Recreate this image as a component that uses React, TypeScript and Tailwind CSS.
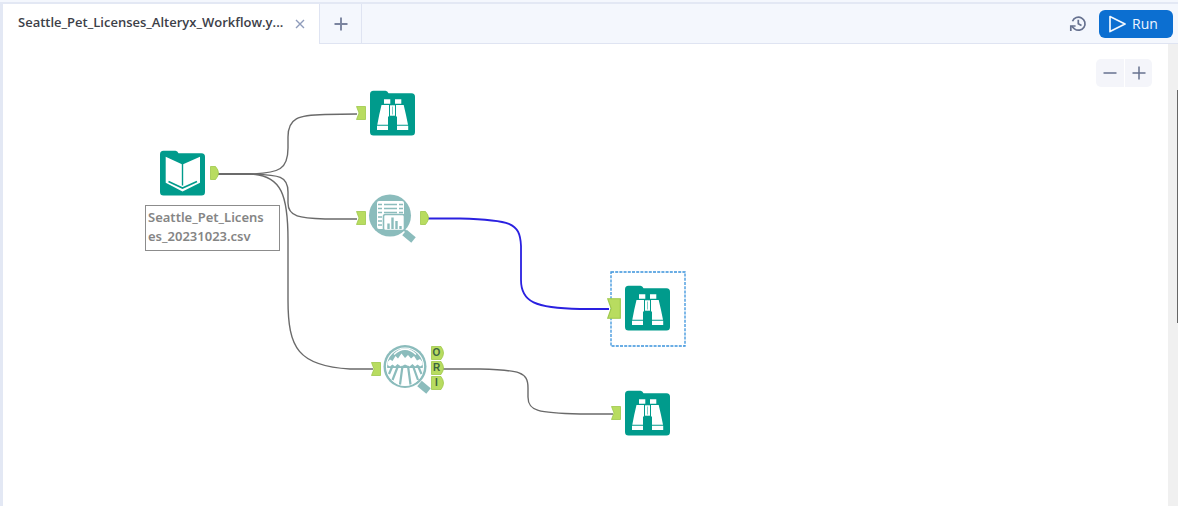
import type { ReactNode } from "react";

const TEAL = "#009b8c";
const SAGE = "#8bbcbc";

function Folder({ children }: { children: ReactNode }) {
  return (
    <svg width="46" height="46" viewBox="0 0 46 46" className="block" aria-hidden="true">
      <path d="M3.500 0.800H15.500Q17.500 0.800 18.500 3.300H41.500Q45 3.300 45 6.800V42Q45 45.500 41.500 45.500H3.500Q0 45.500 0 42V4.300Q0 0.800 3.500 0.800Z" fill={TEAL} />
      {children}
    </svg>
  );
}

function BookIcon() {
  return (
    <Folder>
      <path d="M5.700 6.700L22.500 14.500L40 6.700V32.700L22.500 41.500L5.700 32.700Z" fill="#fff" />
      <path d="M22.500 14V35.500" stroke={TEAL} strokeWidth="1.400" />
      <path d="M8.500 31.500L22.500 38L37 31.500" fill="none" stroke={TEAL} strokeWidth="1.600" />
    </Folder>
  );
}

function BinocularsIcon() {
  return (
    <Folder>
      <path d="M14 9.300H20.300V13.700H14ZM25 9.300H31.300V13.700H25Z" fill="#fff" />
      <path d="M11.500 15H19V26L18 27V34.700H7.300L9.200 25ZM26 15H33.700L36 25L38 34.700H27V27L26 26Z" fill="#fff" />
      <path d="M20 15.300H25V25.700H20Z" fill="#fff" />
      <path d="M22.500 16.500V24.500" stroke="#7fccc4" strokeWidth="1" />
      <path d="M7 35.800H18V40H7ZM27 35.800H38.200V40H27Z" fill="#fff" />
    </Folder>
  );
}

function ReportLensIcon() {
  return (
    <svg width="50" height="52" viewBox="0 0 50 52" className="block" aria-hidden="true">
      <path d="M36.500 39.500L45.500 47" stroke={SAGE} strokeWidth="7" />
      <path d="M33.500 34.500L38.500 39" stroke={SAGE} strokeWidth="2" />
      <circle cx="22" cy="22.500" r="21" fill={SAGE} />
      <path d="M11 8H34Q36 8 36 10V22H35V36H11Q9 36 9 34V10Q9 8 11 8Z" fill="#fff" />
      <path d="M10 11.500H14M16 11.500H29M31 11.500H35M10 15.500H14M16 15.500H29M31 15.500H35M10 19.500H14M16 19.500H29M31 19.500H35M10 24H14M10 28H14M10 32H14" stroke={SAGE} strokeWidth="1.600" />
      <rect x="15.500" y="21.500" width="21" height="16" rx="2" fill="#fff" stroke={SAGE} strokeWidth="1.600" />
      <path d="M20.500 36V30.500M24.500 36V24.500M28.500 36V28M32.500 36V33" stroke={SAGE} strokeWidth="2.400" />
    </svg>
  );
}

function ForestLensIcon() {
  return (
    <svg width="50" height="52" viewBox="0 0 50 52" className="block" aria-hidden="true">
      <path d="M36.500 39.500L45.500 47" stroke={SAGE} strokeWidth="7" />
      <circle cx="22" cy="22.500" r="21.500" fill={SAGE} />
      <circle cx="22" cy="22.500" r="18.500" fill={SAGE} stroke="#fff" strokeWidth="1.200" />
      <path d="M11 10.500Q22 0 33 10.500" fill="none" stroke="#fff" strokeWidth="1.400" />
      <path d="M4.500 21V18L7 15.500L9.500 17L12.500 12L15 14.500L18.500 9.500L22 14L25 11L28 14.500L31 12L34 16.500L37 15L39.500 18V21L37 22.500L34.500 20.500L32 22.500L29.500 20L26.500 22.500L22 20.500L18 22.500L14.500 20L12 22.500L9.500 20.500L7 22.500Z" fill="#fff" />
      <path d="M4 24H40A18 18 0 0 1 4 24Z" fill="#fff" />
      <path d="M9.500 22L6 30M15 22L9.500 36M19.500 22L17 40.500M25 22L27.500 40.500M30 22L35 36M35 22L38.500 30" stroke={SAGE} strokeWidth="2.200" />
    </svg>
  );
}

function InputAnchor({ large = false }: { large?: boolean }) {
  return (
    <svg width={large ? 14 : 10} height={large ? 21 : 14} viewBox="0 0 10 14" preserveAspectRatio="none" className="block" aria-hidden="true">
      <path d="M0.500 0.500H9.500V13.500H0.500L3 7Z" fill="#b8dc60" stroke="#9ec84a" strokeWidth="0.800" />
    </svg>
  );
}

function OutputAnchor() {
  return (
    <svg width="9" height="14" viewBox="0 0 9 14" className="block" aria-hidden="true">
      <path d="M0.500 0.500H5.500Q8.500 4 8.500 7T5.500 13.500H0.500Z" fill="#b8dc60" stroke="#9ec84a" strokeWidth="0.800" />
    </svg>
  );
}

function LetterAnchor({ letter }: { letter: string }) {
  return (
    <div className="relative flex h-[14px] w-[13px] items-center">
      <svg width="13" height="14" viewBox="0 0 13 14" className="absolute inset-0" aria-hidden="true">
        <path d="M0.500 0.500H10Q12.500 4 12.500 7T10 13.500H0.500Z" fill="#b8dc60" stroke="#9ec84a" strokeWidth="0.800" />
      </svg>
      <span className="relative w-[11px] text-center font-['Liberation_Sans',sans-serif] text-[10px] leading-none font-bold text-[#3c6440]">{letter}</span>
    </div>
  );
}

function Wires() {
  return (
    <svg className="pointer-events-none absolute inset-0 size-full" aria-hidden="true">
      <g transform="translate(-3 -44)" fill="none" stroke="#6a6a6a" strokeWidth="1.400">
        <path d="M218 174H250C280 173 288 169 288 148V137C288 118 298 115 325 114.500L357 114" />
        <path d="M218 174H250C280 175 288 176 288 192V203C288 217 300 218 325 219H357" />
        <path d="M218 174H250C282 175 288 196 288 240V300C288 348 298 366 350 369H373" />
        <path d="M443 369H480C520 370 528 372 528 388V397C528 411 538 413 580 414H613" />
        <path d="M428 218.500H460C510 220 520 222 521 246V280C521 302 535 308 580 309H609" stroke="#2a20e0" strokeWidth="1.800" />
      </g>
    </svg>
  );
}

function Canvas() {
  return (
    <main className="relative flex-1 overflow-hidden bg-white">
      <Wires />

      <div className="absolute top-[106px] left-[157px]"><BookIcon /></div>
      <div className="absolute top-[122px] left-[207px]"><OutputAnchor /></div>
      <div className="absolute top-[161px] left-[142px] w-[135px] border border-[#8c8c8c] bg-white px-[2px] pt-[2px] pb-[4px] font-['Noto_Sans',sans-serif] text-[13px] leading-[19px] font-semibold text-[#858585]">
        Seattle_Pet_Licens<br />es_20231023.csv
      </div>

      <div className="absolute top-[62px] left-[353px]"><InputAnchor /></div>
      <div className="absolute top-[46px] left-[367px]"><BinocularsIcon /></div>

      <div className="absolute top-[167px] left-[353px]"><InputAnchor /></div>
      <div className="absolute top-[149px] left-[365px]"><ReportLensIcon /></div>
      <div className="absolute top-[167px] left-[417px]"><OutputAnchor /></div>

      <div className="absolute top-[318px] left-[368px]"><InputAnchor /></div>
      <div className="absolute top-[300px] left-[380px]"><ForestLensIcon /></div>
      <div className="absolute top-[302px] left-[428px] flex flex-col gap-px">
        <LetterAnchor letter="O" />
        <LetterAnchor letter="R" />
        <LetterAnchor letter="I" />
      </div>

      <div className="absolute top-[227px] left-[607px]">
        <svg width="76" height="76" className="block" aria-hidden="true">
          <rect x="1" y="1" width="74" height="74" fill="none" stroke="#3a93dc" strokeWidth="1.300" strokeDasharray="3 1.200" />
        </svg>
      </div>
      <div className="absolute top-[254px] left-[604px]"><InputAnchor large /></div>
      <div className="absolute top-[241px] left-[622px]"><BinocularsIcon /></div>

      <div className="absolute top-[362px] left-[608px]"><InputAnchor /></div>
      <div className="absolute top-[346px] left-[622px]"><BinocularsIcon /></div>

      <div className="absolute top-[15px] right-[16px] flex gap-px">
        <button type="button" aria-label="Zoom out" className="flex h-[28px] w-[28px] items-center justify-center rounded-l-[5px] bg-[#f4f5fa]">
          <svg width="14" height="14" viewBox="0 0 14 14" aria-hidden="true"><path d="M0.500 7H13.500" stroke="#66718f" strokeWidth="1.500" /></svg>
        </button>
        <button type="button" aria-label="Zoom in" className="flex h-[28px] w-[27px] items-center justify-center rounded-r-[5px] bg-[#f4f5fa]">
          <svg width="14" height="14" viewBox="0 0 14 14" aria-hidden="true"><path d="M0.500 7H13.500M7 0.500V13.500" stroke="#66718f" strokeWidth="1.500" /></svg>
        </button>
      </div>
    </main>
  );
}

function TabBar() {
  return (
    <header className="flex h-[42px] border-t-2 border-[#e3e8f4] bg-[#f4f7fd]">
      <div className="flex w-[316px] items-center bg-white pl-[15px]">
        <a href="#workflow" className="w-[270px] pb-[2px] whitespace-nowrap text-[13px] font-semibold text-[#3c4048]">Seattle_Pet_Licenses_Alteryx_Workflow.y...</a>
        <button type="button" aria-label="Close tab" className="ml-[7px] flex size-[10px] items-center justify-center">
          <svg width="10" height="10" viewBox="0 0 10 10" aria-hidden="true"><path d="M1 1L9 9M9 1L1 9" stroke="#8f9cbb" strokeWidth="1.400" /></svg>
        </button>
      </div>
      <button type="button" aria-label="New tab" className="flex w-[43px] items-center justify-center border-x border-b border-[#dfe4f2]">
        <svg width="14" height="14" viewBox="0 0 14 14" aria-hidden="true"><path d="M0.500 7H13.500M7 0.500V13.500" stroke="#7a849f" strokeWidth="1.900" /></svg>
      </button>
      <div className="flex flex-1 items-center justify-end gap-[12px] border-b border-[#dfe4f2] pr-[5px]">
        <button type="button" aria-label="Run history" className="flex size-[18px] items-center justify-center">
          <svg width="18" height="18" viewBox="0 0 18 18" fill="none" stroke="#66718f" strokeWidth="1.700" aria-hidden="true">
            <path d="M3.500 6.200A6.500 6.500 0 1 1 5.500 13.800L2.500 11.200" />
            <path d="M1.800 16V11H6.600" />
            <path d="M9.300 4.800V8.700L12.500 10.500" />
          </svg>
        </button>
        <button type="button" className="flex h-[28px] w-[74px] items-center gap-[6px] rounded-[6px] bg-[#0c6fd1] pl-[10px] text-[14px] text-[#eef5ff]">
          <svg width="17" height="18" viewBox="0 0 17 18" aria-hidden="true"><path d="M1 1.500L16 9L1 16.500Z" fill="none" stroke="#f2f8ff" strokeWidth="1.700" strokeLinejoin="round" /></svg>
          Run
        </button>
      </div>
    </header>
  );
}

export default function App() {
  return (
    <div className="flex min-h-screen flex-col bg-[#f4f7fd] pt-[2px] font-['Open_Sans',sans-serif]">
      <div className="flex flex-1 flex-col border-l-3 border-[#e3e8f4]">
        <TabBar />
        <div className="flex flex-1">
          <Canvas />
          <div className="flex w-[10px] justify-end bg-[#f0f0f0] pt-[46px]">
            <div className="h-[233px] w-px bg-[#666666]" />
          </div>
        </div>
      </div>
    </div>
  );
}
